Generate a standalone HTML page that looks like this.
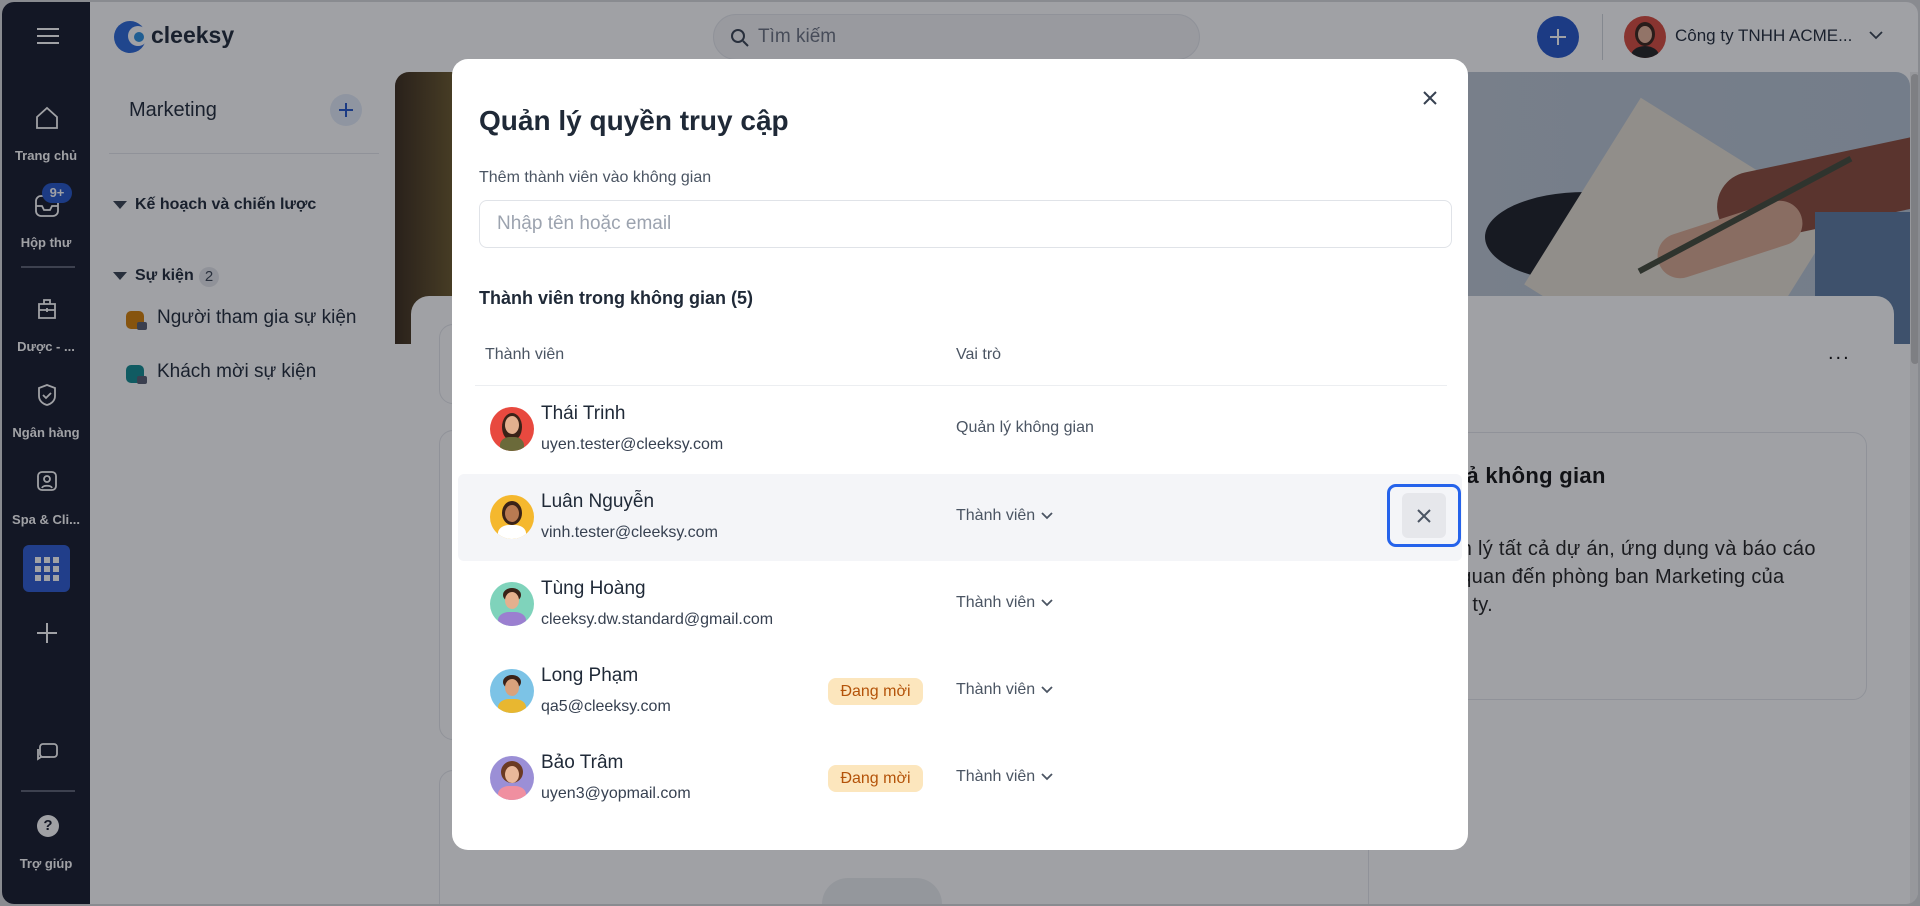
<!DOCTYPE html>
<html><head><meta charset="utf-8">
<style>
*{box-sizing:border-box;margin:0;padding:0}
html,body{width:1920px;height:906px;overflow:hidden}
body{background:#d9dadd;font-family:"Liberation Sans","Noto Sans CJK SC",sans-serif;position:relative}
.win{position:absolute;left:2px;top:2px;width:1916px;height:902px;border-radius:12px;overflow:hidden;background:#fff}
.abs{position:absolute}
.side{left:0;top:0;width:88px;height:902px;background:#151a2b}
.side .lbl{position:absolute;width:88px;text-align:center;color:#fff;font-size:13px;font-weight:bold}
.panel{left:88px;top:70px;width:304px;height:832px;background:#fff}
.txt{position:absolute;white-space:nowrap}
.ov{position:absolute;left:0;top:0;width:1920px;height:906px;background:rgba(18,20,30,0.40)}
.modal{position:absolute;left:452px;top:59px;width:1016px;height:791px;background:#fff;border-radius:16px}
.row{position:absolute;left:6px;width:1004px;height:87px}
.av{position:absolute;left:32px;top:21px;width:44px;height:44px;border-radius:50%;overflow:hidden}
.nm{position:absolute;left:83px;top:17px;font-size:19px;color:#1f2937}
.em{position:absolute;left:83px;top:50px;font-size:16px;color:#374151}
.role{position:absolute;left:498px;top:33px;font-size:16px;color:#4b5563}
.badge{position:absolute;left:370px;top:30px;width:95px;height:27px;border-radius:8px;background:#fce6bd;color:#b45309;font-size:16px;text-align:center;line-height:27px}
</style></head><body>
<div class="win">
 <div class="abs side">
  <svg class="abs" style="left:34px;top:25px" width="24" height="18"><path d="M1 2h22M1 9h22M1 16h22" stroke="#fff" stroke-width="2"/></svg>
  <svg class="abs" style="left:32px;top:103px" width="26" height="26" fill="none" stroke="#fff" stroke-width="1.8"><path d="M3 12L13 3l10 9v11H3z"/></svg>
  <div class="lbl" style="top:146px">Trang chủ</div>
  <svg class="abs" style="left:32px;top:192px" width="26" height="24" fill="none" stroke="#fff" stroke-width="1.8"><rect x="2" y="2" width="22" height="20" rx="5"/><path d="M2 12h6l2 4h6l2-4h6"/></svg>
  <div class="abs" style="left:40px;top:181px;width:30px;height:20px;border-radius:10px;background:#2456c9;color:#fff;font-size:13px;font-weight:bold;text-align:center;line-height:20px">9+</div>
  <div class="lbl" style="top:233px">Hộp thư</div>
  <div class="abs" style="left:19px;top:264px;width:54px;height:2px;background:#5b6070"></div>
  <svg class="abs" style="left:33px;top:295px" width="24" height="24" fill="none" stroke="#fff" stroke-width="1.8"><path d="M4 7h16v14H4zM9 7V3h6v4M4 13h16M12 11v4"/></svg>
  <div class="lbl" style="top:337px">Dược - ...</div>
  <svg class="abs" style="left:34px;top:381px" width="22" height="24" fill="none" stroke="#fff" stroke-width="1.8"><path d="M11 2l8 3v8c0 5-4 8-8 9-4-1-8-4-8-9V5z"/><path d="M7 12l3 3 5-5"/></svg>
  <div class="lbl" style="top:423px">Ngân hàng</div>
  <svg class="abs" style="left:33px;top:467px" width="24" height="24" fill="none" stroke="#fff" stroke-width="1.8"><rect x="3" y="3" width="18" height="18" rx="4"/><circle cx="12" cy="10" r="3"/><path d="M7 19c1-3 9-3 10 0"/></svg>
  <div class="lbl" style="top:510px">Spa &amp; Cli...</div>
  <div class="abs" style="left:21px;top:543px;width:47px;height:47px;border-radius:6px;background:#2c5bd3"></div>
  <svg class="abs" style="left:33px;top:555px" width="24" height="24" fill="#fff"><rect x="0" y="0" width="6" height="6"/><rect x="9" y="0" width="6" height="6"/><rect x="18" y="0" width="6" height="6"/><rect x="0" y="9" width="6" height="6"/><rect x="9" y="9" width="6" height="6"/><rect x="18" y="9" width="6" height="6"/><rect x="0" y="18" width="6" height="6"/><rect x="9" y="18" width="6" height="6"/><rect x="18" y="18" width="6" height="6"/></svg>
  <svg class="abs" style="left:34px;top:620px" width="22" height="22"><path d="M11 1v20M1 11h20" stroke="#fff" stroke-width="2"/></svg>
  <svg class="abs" style="left:33px;top:740px" width="24" height="22" fill="none" stroke="#fff" stroke-width="1.8"><rect x="5" y="2" width="17" height="13" rx="3"/><path d="M3 7v10l3-2h9"/></svg>
  <div class="abs" style="left:19px;top:788px;width:54px;height:2px;background:#5b6070"></div>
  <div class="abs" style="left:35px;top:813px;width:22px;height:22px;border-radius:50%;background:#fff;color:#151a2b;font-weight:bold;font-size:15px;text-align:center;line-height:22px">?</div>
  <div class="lbl" style="top:854px">Trợ giúp</div>
 </div>
 <svg class="abs" style="left:111px;top:18px" width="34" height="34"><circle cx="17" cy="17" r="16" fill="#2a68d8"/><circle cx="25" cy="16" r="10" fill="#fff"/><circle cx="26" cy="17" r="5" fill="#2a8fe0"/></svg>
 <div class="txt" style="left:149px;top:20px;font-size:23px;font-weight:bold;color:#1f2937">cleeksy</div>
 <div class="abs" style="left:711px;top:12px;width:487px;height:46px;border-radius:23px;background:#f3f4f6;border:1px solid #e5e7eb"></div>
 <svg class="abs" style="left:728px;top:26px" width="20" height="20" fill="none" stroke="#374151" stroke-width="2"><circle cx="8" cy="8" r="6"/><path d="M13 13l5 5"/></svg>
 <div class="txt" style="left:756px;top:24px;font-size:19px;color:#6b7280">Tìm kiếm</div>
 <div class="abs" style="left:1535px;top:14px;width:42px;height:42px;border-radius:50%;background:#2456c9"></div>
 <svg class="abs" style="left:1546px;top:25px" width="20" height="20"><path d="M10 2v16M2 10h16" stroke="#fff" stroke-width="2"/></svg>
 <div class="abs" style="left:1600px;top:12px;width:1px;height:46px;background:#d1d5db"></div>
 <div class="abs" style="left:1622px;top:14px;width:42px;height:42px;border-radius:50%;background:#d84a3c;overflow:hidden"><div class="abs" style="left:11px;top:6px;width:20px;height:24px;border-radius:50%;background:#3a2218"></div><div class="abs" style="left:14px;top:10px;width:14px;height:17px;border-radius:50%;background:#e8b49a"></div><div class="abs" style="left:7px;top:30px;width:28px;height:20px;border-radius:50%;background:#222"></div></div>
 <div class="txt" style="left:1673px;top:24px;font-size:17px;color:#1f2937">Công ty TNHH ACME...</div>
 <svg class="abs" style="left:1866px;top:28px" width="16" height="10" fill="none" stroke="#374151" stroke-width="1.8"><path d="M2 2l6 6 6-6"/></svg>
 <div class="abs panel"></div>
 <div class="txt" style="left:127px;top:97px;font-size:20px;color:#1f2937">Marketing</div>
 <div class="abs" style="left:328px;top:92px;width:32px;height:32px;border-radius:50%;background:#e3ebf8"></div>
 <svg class="abs" style="left:335px;top:99px" width="18" height="18"><path d="M9 2v14M2 9h14" stroke="#2456c9" stroke-width="2"/></svg>
 <div class="abs" style="left:107px;top:151px;width:270px;height:1px;background:#e5e7eb"></div>
 <svg class="abs" style="left:111px;top:199px" width="14" height="9"><path d="M0 0h14L7 8z" fill="#374151"/></svg>
 <div class="txt" style="left:133px;top:194px;font-size:16px;font-weight:bold;color:#1f2937">Kế hoạch và chiến lược</div>
 <svg class="abs" style="left:111px;top:270px" width="14" height="9"><path d="M0 0h14L7 8z" fill="#374151"/></svg>
 <div class="txt" style="left:133px;top:265px;font-size:16px;font-weight:bold;color:#1f2937">Sự kiện</div>
 <div class="abs" style="left:197px;top:265px;width:20px;height:20px;border-radius:10px;background:#e5e7eb;font-size:15px;color:#374151;text-align:center;line-height:20px">2</div>
 <div class="abs" style="left:124px;top:309px;width:18px;height:18px;border-radius:5px;background:#d47f06"></div>
 <div class="abs" style="left:135px;top:320px;width:10px;height:8px;border-radius:2px;background:#555d70"></div>
 <div class="txt" style="left:155px;top:305px;font-size:19px;color:#1f2937">Người tham gia sự kiện</div>
 <div class="abs" style="left:124px;top:363px;width:18px;height:18px;border-radius:5px;background:#0f8a8f"></div>
 <div class="abs" style="left:135px;top:374px;width:10px;height:8px;border-radius:2px;background:#555d70"></div>
 <div class="txt" style="left:155px;top:359px;font-size:19px;color:#1f2937">Khách mời sự kiện</div>
 <div class="abs" style="left:393px;top:70px;width:1515px;height:272px;border-radius:14px 14px 0 0;overflow:hidden;background:linear-gradient(90deg,#3a2a1a 0%,#6d5a2a 4%,#8b7a3a 6%,#b9c3cf 50%,#bcc6d2 70%,#b6c4d2 100%)">
  <div class="abs" style="left:1090px;top:120px;width:200px;height:90px;background:#1c1f26;border-radius:50%"></div>
  <div class="abs" style="left:1170px;top:70px;width:230px;height:220px;background:#e6e0d2;transform:rotate(32deg)"></div>
  <div class="abs" style="left:1320px;top:80px;width:260px;height:70px;background:#8a4a3a;border-radius:40px;transform:rotate(-12deg)"></div>
  <div class="abs" style="left:1420px;top:140px;width:120px;height:140px;background:#5c7aa0"></div>
  <div class="abs" style="left:1260px;top:145px;width:150px;height:45px;background:#d9a890;border-radius:25px;transform:rotate(-18deg)"></div>
  <div class="abs" style="left:1230px;top:140px;width:240px;height:6px;background:#444a3a;transform:rotate(-28deg)"></div>
 </div>
 <div class="abs" style="left:409px;top:294px;width:1483px;height:608px;border-radius:18px 18px 0 0;background:#fff"></div>
 <div class="abs" style="left:1908px;top:70px;width:10px;height:832px;background:#f0f0f0"></div>
 <div class="abs" style="left:1909px;top:72px;width:8px;height:290px;background:#c7c7c7;border-radius:4px"></div>
 <div class="txt" style="left:1826px;top:340px;font-size:20px;color:#111;letter-spacing:2px">...</div>
 <div class="abs" style="left:437px;top:322px;width:930px;height:80px;border:1px solid #e5e7eb;border-radius:14px"></div>
 <div class="abs" style="left:437px;top:428px;width:930px;height:310px;border:1px solid #e5e7eb;border-radius:14px"></div>
 <div class="abs" style="left:437px;top:768px;width:930px;height:160px;border:1px solid #e5e7eb;border-radius:14px"></div>
 <div class="abs" style="left:820px;top:876px;width:120px;height:26px;border-radius:60px 60px 0 0;background:#eceef1"></div>
 <div class="abs" style="left:1371px;top:430px;width:494px;height:268px;border:1px solid #e5e7eb;border-radius:14px"></div>
 <div class="txt" style="left:1418px;top:461px;font-size:22px;font-weight:bold;color:#111;letter-spacing:0.3px">Mô tả không gian</div>
 <div class="txt" style="left:1420px;top:533px;font-size:20px;color:#222;line-height:28px;letter-spacing:0.3px">Quản lý tất cả dự án, ứng dụng và báo cáo<br>liên quan đến phòng ban Marketing của<br>công ty.</div>
</div>
<div class="ov"></div>
<div class="modal">
 <svg class="abs" style="left:970px;top:31px" width="16" height="16" fill="none" stroke="#374151" stroke-width="2"><path d="M2 2l12 12M14 2L2 14"/></svg>
 <div class="txt" style="left:27px;top:46px;font-size:28px;font-weight:bold;color:#1f2937">Quản lý quyền truy cập</div>
 <div class="txt" style="left:27px;top:110px;font-size:16px;color:#4b5563">Thêm thành viên vào không gian</div>
 <div class="abs" style="left:27px;top:141px;width:973px;height:48px;border:1px solid #e0e3e8;border-radius:8px"></div>
 <div class="txt" style="left:45px;top:154px;font-size:19px;color:#9ca3af">Nhập tên hoặc email</div>
 <div class="txt" style="left:27px;top:229px;font-size:18px;font-weight:bold;color:#1f2937">Thành viên trong không gian (5)</div>
 <div class="txt" style="left:33px;top:287px;font-size:16px;color:#4b5563">Thành viên</div>
 <div class="txt" style="left:504px;top:287px;font-size:16px;color:#4b5563">Vai trò</div>
 <div class="abs" style="left:23px;top:326px;width:972px;height:1px;background:#eceef1"></div>
 <div class="row" style="top:327px">
  <div class="av" style="background:#e8493f"><div class="abs" style="left:12px;top:6px;width:20px;height:28px;border-radius:50%;background:#3a2218"></div><div class="abs" style="left:15px;top:9px;width:14px;height:18px;border-radius:50%;background:#e3b08f"></div><div class="abs" style="left:10px;top:30px;width:24px;height:20px;border-radius:40%;background:#6b6a3a"></div></div>
  <div class="nm">Thái Trinh</div><div class="em">uyen.tester@cleeksy.com</div>
  <div class="role">Quản lý không gian</div>
 </div>
 <div class="row" style="top:415px;background:#f4f5f8;border-radius:6px">
  <div class="av" style="background:#f5b82e"><div class="abs" style="left:12px;top:6px;width:20px;height:24px;border-radius:50%;background:#3a2218"></div><div class="abs" style="left:15px;top:10px;width:14px;height:17px;border-radius:50%;background:#b97a52"></div><div class="abs" style="left:8px;top:30px;width:28px;height:20px;border-radius:40%;background:#fff"></div></div>
  <div class="nm">Luân Nguyễn</div><div class="em">vinh.tester@cleeksy.com</div>
  <div class="role">Thành viên <svg width="14" height="9" fill="none" stroke="#4b5563" stroke-width="1.8"><path d="M2 2l5 5 5-5"/></svg></div>
  <div class="abs" style="left:929px;top:10px;width:74px;height:63px;border:3px solid #2563eb;border-radius:9px"></div>
  <div class="abs" style="left:944px;top:19px;width:44px;height:45px;border-radius:6px;background:#e6e7eb"></div>
  <svg class="abs" style="left:958px;top:34px" width="16" height="16" fill="none" stroke="#4b5563" stroke-width="2"><path d="M2 2l12 12M14 2L2 14"/></svg>
 </div>
 <div class="row" style="top:502px">
  <div class="av" style="background:#7fd3bb"><div class="abs" style="left:13px;top:6px;width:18px;height:14px;border-radius:50%;background:#3a2218"></div><div class="abs" style="left:15px;top:10px;width:14px;height:17px;border-radius:50%;background:#e5b08e"></div><div class="abs" style="left:8px;top:30px;width:28px;height:20px;border-radius:40%;background:#9b7fd0"></div></div>
  <div class="nm">Tùng Hoàng</div><div class="em">cleeksy.dw.standard@gmail.com</div>
  <div class="role">Thành viên <svg width="14" height="9" fill="none" stroke="#4b5563" stroke-width="1.8"><path d="M2 2l5 5 5-5"/></svg></div>
 </div>
 <div class="row" style="top:589px">
  <div class="av" style="background:#7cc3e6"><div class="abs" style="left:13px;top:6px;width:18px;height:14px;border-radius:50%;background:#3a2218"></div><div class="abs" style="left:15px;top:10px;width:14px;height:17px;border-radius:50%;background:#d9a27c"></div><div class="abs" style="left:8px;top:30px;width:28px;height:20px;border-radius:40%;background:#e8b730"></div></div>
  <div class="nm">Long Phạm</div><div class="em">qa5@cleeksy.com</div>
  <div class="badge">Đang mời</div>
  <div class="role">Thành viên <svg width="14" height="9" fill="none" stroke="#4b5563" stroke-width="1.8"><path d="M2 2l5 5 5-5"/></svg></div>
 </div>
 <div class="row" style="top:676px">
  <div class="av" style="background:#9b8fd6"><div class="abs" style="left:11px;top:5px;width:22px;height:22px;border-radius:50%;background:#6b3a22"></div><div class="abs" style="left:15px;top:10px;width:14px;height:17px;border-radius:50%;background:#e9b89a"></div><div class="abs" style="left:8px;top:30px;width:28px;height:20px;border-radius:40%;background:#f08fa0"></div></div>
  <div class="nm">Bảo Trâm</div><div class="em">uyen3@yopmail.com</div>
  <div class="badge">Đang mời</div>
  <div class="role">Thành viên <svg width="14" height="9" fill="none" stroke="#4b5563" stroke-width="1.8"><path d="M2 2l5 5 5-5"/></svg></div>
 </div>
</div>
</body></html>
